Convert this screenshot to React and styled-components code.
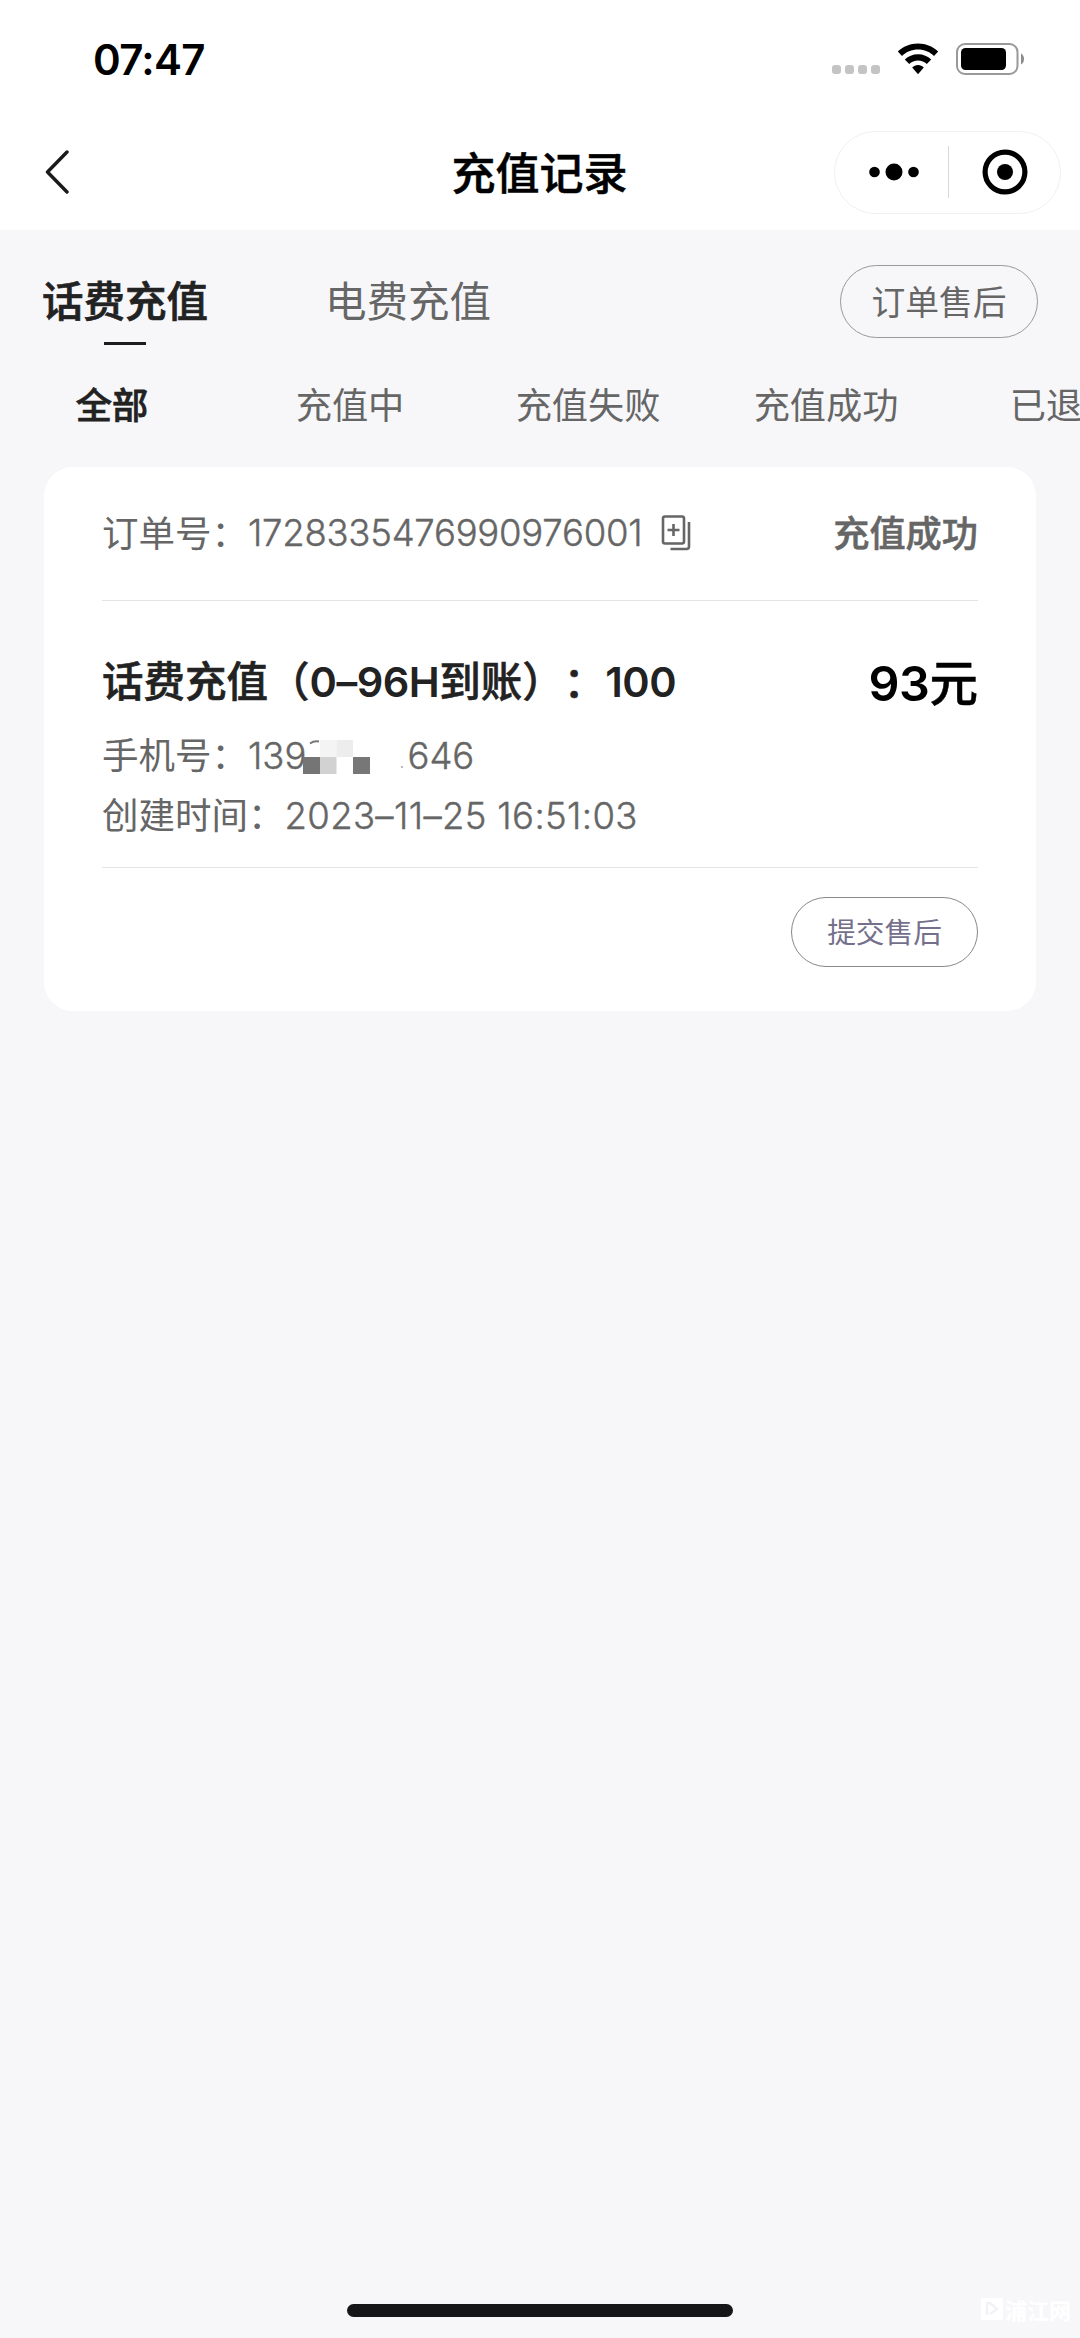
import React from "react";
import styled, { createGlobalStyle } from "styled-components";

const TABS = ["话费充值", "电费充值"];
const FILTERS = ["全部", "充值中", "充值失败", "充值成功", "已退款"];

export default function App() {
  return (
    <Page lang="zh-CN">
      <GlobalStyle />
      <StatusBar>
        <Time>07:47</Time>
        <StatusIcons>
          <Signal>
            <i />
            <i />
            <i />
            <i />
          </Signal>
          <WifiIcon />
          <BatteryIcon />
        </StatusIcons>
      </StatusBar>
      <NavBar>
        <BackIcon />
        <NavTitle>充值记录</NavTitle>
        <Capsule>
          <MoreIcon />
          <CapsuleLine />
          <CloseIcon />
        </Capsule>
      </NavBar>
      <TabRow>
        {TABS.map((tab, i) => (
          <Tab key={tab} $active={i === 0}>
            {tab}
          </Tab>
        ))}
        <ServiceButton>订单售后</ServiceButton>
      </TabRow>
      <FilterRow>
        {FILTERS.map((filter, i) => (
          <Filter key={filter} $active={i === 0}>
            {filter}
          </Filter>
        ))}
      </FilterRow>
      <OrderCard />
      <HomeBar />
      <Watermark>
        <WatermarkLogo />
        浦江网
      </Watermark>
    </Page>
  );
}

function OrderCard() {
  return (
    <Card>
      <CardHead>
        <Label>订单号：</Label>
        <OrderNo>1728335476990976001</OrderNo>
        <CopyIcon />
        <Status>充值成功</Status>
      </CardHead>
      <CardBody>
        <TitleRow>
          <Product>
            话费充值（<Num>0–96H</Num>到账）：<Num>100</Num>
          </Product>
          <Price>
            <Num>93</Num>元
          </Price>
        </TitleRow>
        <Line>
          <Label>手机号：</Label>
          <Phone>
            139
            <Mosaic />
            646
          </Phone>
        </Line>
        <Line>
          <Label>创建时间：</Label>
          <DateText>2023–11–25 16:51:03</DateText>
        </Line>
      </CardBody>
      <CardFoot>
        <SubmitButton>提交售后</SubmitButton>
      </CardFoot>
    </Card>
  );
}

function WifiIcon() {
  return (
    <svg width="42" height="32" viewBox="0 0 42 32">
      <path d="M21 0.5C29 0.5 36 3.6 41.2 8.6L37 13C32.8 9 27.2 6.6 21 6.6S9.2 9 5 13L0.8 8.6C6 3.6 13 0.5 21 0.5Z" />
      <path d="M21 11.2C26.2 11.2 30.8 13.2 34.2 16.5L29.8 20.9C27.5 18.7 24.4 17.4 21 17.4S14.5 18.7 12.2 20.9L7.8 16.5C11.2 13.2 15.8 11.2 21 11.2Z" />
      <path d="M21 22C23.3 22 25.3 22.9 26.8 24.4L21 31.3L15.2 24.4C16.7 22.9 18.7 22 21 22Z" />
    </svg>
  );
}

function BatteryIcon() {
  return (
    <svg width="69" height="32" viewBox="0 0 69 32">
      <rect x="1" y="1" width="60.5" height="30" rx="8" fill="none" stroke="#999" strokeWidth="2" />
      <rect x="5" y="5" width="45" height="22" rx="4.5" />
      <path d="M65 10.5C69 12.5 69 19.5 65 21.5Z" fill="#8c8c8c" />
    </svg>
  );
}

function BackIcon() {
  return (
    <svg width="25" height="44" viewBox="0 0 25 44">
      <path
        d="M22 2L2.5 22L22 42"
        fill="none"
        stroke="#1a1a1a"
        strokeWidth="3.4"
        strokeLinecap="round"
        strokeLinejoin="round"
      />
    </svg>
  );
}

function MoreIcon() {
  return (
    <svg width="50" height="18" viewBox="0 0 50 18">
      <circle cx="5.5" cy="9" r="5.3" />
      <circle cx="25" cy="9" r="8.5" />
      <circle cx="44.5" cy="9" r="5.3" />
    </svg>
  );
}

function CloseIcon() {
  return (
    <svg width="46" height="46" viewBox="0 0 46 46">
      <circle cx="23" cy="23" r="19.9" fill="none" stroke="#000" strokeWidth="5.2" />
      <circle cx="23" cy="23" r="8" />
    </svg>
  );
}

function CopyIcon() {
  return (
    <svg width="30" height="36" viewBox="0 0 30 36" fill="none" stroke="#666" strokeWidth="2.6">
      <rect x="2" y="1.5" width="21" height="27" rx="2" />
      <path d="M12.5 9V21M6.5 15H18.5" />
      <path d="M28 7V31.5Q28 34 25.5 34H9.5" />
    </svg>
  );
}

// pixelated patch that hides the middle digits
function Mosaic() {
  return (
    <MosaicSvg width="102" height="36" viewBox="0 0 102 36">
      <path d="M7 4.5Q11 1.5 16 2.5" fill="none" stroke="#777" strokeWidth="2" />
      <rect x="17" y="1" width="16.5" height="17" fill="#f4f4f4" />
      <rect x="33.5" y="1" width="16.5" height="17" fill="#ededed" />
      <rect x="0" y="18" width="17" height="17" fill="#757575" />
      <rect x="17" y="18" width="16.5" height="17" fill="#d2d2d2" />
      <rect x="50" y="18" width="17" height="17" fill="#777" />
      <rect x="98" y="27" width="2" height="2" fill="#bbb" />
    </MosaicSvg>
  );
}

function WatermarkLogo() {
  return (
    <svg width="22" height="22" viewBox="0 0 22 22">
      <rect width="22" height="22" rx="1" fill="#fff" />
      <path d="M6 17V5H9L16 11L9 16" fill="none" stroke="#f2f2f6" strokeWidth="2.5" />
    </svg>
  );
}

const GlobalStyle = createGlobalStyle`
  * {
    box-sizing: border-box;
  }
  body {
    margin: 0;
    background-color: #f7f7fa;
  }
  svg {
    display: block;
    flex-shrink: 0;
  }
`;
const Page = styled.div`
  position: relative;
  width: 1080px;
  height: 2338px;
  overflow: hidden;
  background-color: #f7f7fa;
  font-family: Inter, "Noto Sans CJK SC", sans-serif;
  color: #666;
  white-space: nowrap;
  text-spacing-trim: space-all;
`;
const StatusBar = styled.div`
  display: flex;
  justify-content: space-between;
  height: 115px;
  padding: 43px 55px 0 93px;
  background-color: white;
`;
const Time = styled.span`
  height: 34px;
  line-height: 33px;
  font-size: 42px;
  font-weight: 600;
  letter-spacing: -0.7px;
  color: #000;
`;
const StatusIcons = styled.div`
  display: flex;
  height: 32px;
`;
const Signal = styled.div`
  display: flex;
  align-items: flex-end;
  gap: 4px;
  margin-right: 17px;
  padding-bottom: 1px;
  i {
    width: 9px;
    height: 9px;
    border-radius: 3px;
    background-color: #c4c4c4;
  }
  & + svg {
    margin-right: 17px;
  }
`;
const NavBar = styled.div`
  display: flex;
  align-items: center;
  justify-content: space-between;
  height: 115px;
  padding: 0 19px 1px 45px;
  background-color: white;
`;
const NavTitle = styled.h1`
  margin: -2px 0 0 175px;
  flex: 1;
  text-align: center;
  font-size: 44px;
  font-weight: 500;
  -webkit-text-stroke: 0.5px;
  color: #000;
`;
const Capsule = styled.div`
  display: flex;
  align-items: center;
  justify-content: space-between;
  width: 227px;
  height: 83px;
  padding: 0 32px 0 34px;
  border: 1px solid #f0f0f0;
  border-radius: 42px;
`;
const CapsuleLine = styled.div`
  width: 1px;
  height: 52px;
  margin-left: -5px;
  background-color: #d8d8d8;
`;
const TabRow = styled.div`
  display: flex;
  align-items: center;
  height: 108px;
  padding: 35px 42px 0 42px;
`;
const Tab = styled.div`
  position: relative;
  padding-top: 1px;
  margin-right: 117px;
  line-height: 73px;
  font-size: 41.5px;
  font-weight: ${(props) => (props.$active ? 500 : 400)};
  -webkit-text-stroke: ${(props) => (props.$active ? "0.7px" : "0")};
  color: ${(props) => (props.$active ? "#222" : "#666")};
  &::after {
    content: "";
    display: ${(props) => (props.$active ? "block" : "none")};
    position: absolute;
    left: 50%;
    bottom: -6px;
    width: 42px;
    height: 3px;
    margin-left: -21px;
    background-color: #1c1c1c;
  }
`;
const ServiceButton = styled.button`
  width: 198px;
  height: 73px;
  margin-left: auto;
  padding: 0 0 3px;
  border: 1px solid #999;
  border-radius: 37px;
  background: none;
  font-family: inherit;
  font-size: 33.8px;
  color: #666;
`;
const FilterRow = styled.div`
  display: flex;
  margin: 43px 0 36px -7px;
`;
const Filter = styled.div`
  flex: 0 0 238px;
  height: 50px;
  line-height: 50px;
  text-align: center;
  font-size: 36.2px;
  font-weight: ${(props) => (props.$active ? 500 : 400)};
  -webkit-text-stroke: ${(props) => (props.$active ? "0.7px" : "0")};
  color: ${(props) => (props.$active ? "#222" : "#666")};
`;
const Card = styled.div`
  width: 992px;
  height: 544px;
  margin-left: 44px;
  padding: 0 58px;
  border-radius: 29px;
  background-color: white;
`;
const CardHead = styled.div`
  display: flex;
  align-items: center;
  height: 134px;
  padding-bottom: 5px;
  border-bottom: 1px solid #e4e4e4;
  font-size: 36.5px;
`;
const Label = styled.span`
  font-size: 36.5px;
`;
const OrderNo = styled.span`
  margin-right: auto;
  padding-top: 3px;
  font-weight: 300;
  letter-spacing: -0.25px;
  -webkit-text-stroke: 0.4px;
  & + svg {
    margin: 4px 142px 0 0;
  }
`;
const Status = styled.span`
  font-size: 36.2px;
  font-weight: 500;
  -webkit-text-stroke: 0.5px;
`;
const CardBody = styled.div`
  height: 267px;
  padding-top: 51px;
  border-bottom: 1px solid #e4e4e4;
`;
const TitleRow = styled.div`
  display: flex;
  justify-content: space-between;
  height: 60px;
  margin-bottom: 14px;
  line-height: 60px;
`;
const Product = styled.h2`
  margin: 0;
  font-size: 41.5px;
  font-weight: 500;
  -webkit-text-stroke: 0.6px;
  color: #222;
`;
const Num = styled.span`
  font-weight: 600;
  letter-spacing: -0.5px;
  -webkit-text-stroke: 0;
`;
const Price = styled.span`
  padding-top: 2px;
  font-size: 48.5px;
  font-weight: 500;
  -webkit-text-stroke: 0.5px;
  color: #000;
`;
const Line = styled.div`
  display: flex;
  height: 60px;
  line-height: 60px;
  font-size: 36.5px;
`;
const Phone = styled.span`
  display: flex;
  font-weight: 300;
  -webkit-text-stroke: 0.4px;
`;
const MosaicSvg = styled.svg`
  margin: 13px 2px 0 -3px;
`;
const DateText = styled.span`
  font-weight: 300;
  letter-spacing: 0.35px;
  -webkit-text-stroke: 0.4px;
`;
const CardFoot = styled.div`
  display: flex;
  justify-content: flex-end;
  padding-top: 29px;
`;
const SubmitButton = styled.button`
  width: 187px;
  height: 70px;
  padding: 0 0 3px;
  border: 1px solid #888;
  border-radius: 35px;
  background: none;
  font-family: inherit;
  font-size: 28.7px;
  color: #74708c;
`;
const HomeBar = styled.div`
  position: absolute;
  left: 347px;
  bottom: 21px;
  width: 386px;
  height: 13px;
  border-radius: 7px;
  background-color: #161619;
`;
const Watermark = styled.div`
  position: absolute;
  right: 9px;
  bottom: 17px;
  display: flex;
  align-items: center;
  gap: 2px;
  height: 24px;
  font-size: 22px;
  font-weight: 700;
  color: white;
`;
